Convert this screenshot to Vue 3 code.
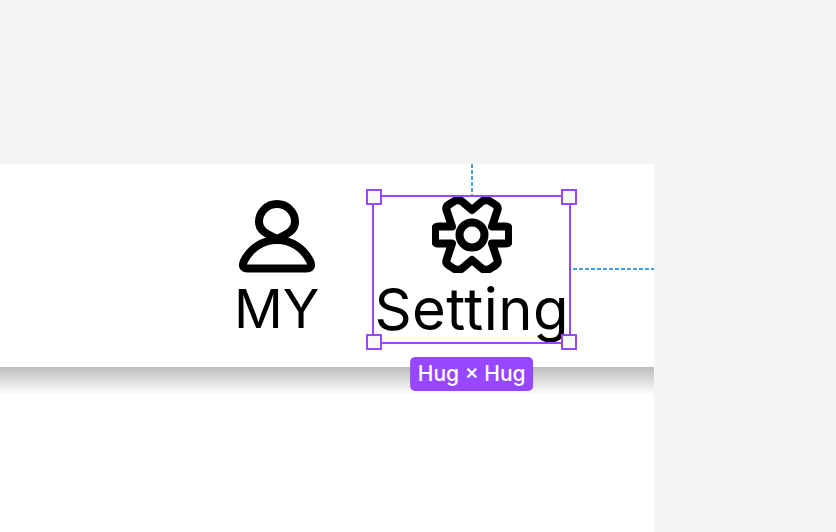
<script setup>
const corners = ["tl", "tr", "bl", "br"];
</script>

<template>
  <div class="page">
    <div class="panel">
      <nav class="tabbar">
        <div class="tab">
          <svg class="icon" width="80" height="76" viewBox="0 0 80 76" fill="none" stroke="#000" stroke-width="8" stroke-linejoin="round">
            <path d="M40 42C33 38 22 35 22 25A18 18 0 0 1 58 25C58 35 47 38 40 42Z" />
            <path d="M40 43C25 43 13 52 7 64Q3.500 71.500 11 71.500L69 71.500Q76.500 71.500 73 64C67 52 55 43 40 43Z" />
          </svg>
          <span class="label">MY</span>
        </div>

        <div class="tab selected">
          <svg class="icon" width="80" height="76" viewBox="-40 -38 80 76" fill="none" stroke="#000" stroke-width="8" stroke-linejoin="round">
            <path d="M0 -25L10 -33.500Q13.500 -36 17.500 -34L23 -30.500Q27 -28 25 -23.500L20 -8.500L33 -8.500Q37 -8.500 37 -4.500L37 4.500Q37 8.500 33 8.500L20 8.500L25 23.500Q27 28 23 30.500L17.500 34Q13.500 36 10 33.500L0 25L-10 33.500Q-13.500 36 -17.500 34L-23 30.500Q-27 28 -25 23.500L-20 8.500L-33 8.500Q-37 8.500 -37 4.500L-37 -4.500Q-37 -8.500 -33 -8.500L-20 -8.500L-25 -23.500Q-27 -28 -23 -30.500L-17.500 -34Q-13.500 -36 -10 -33.500Z" />
            <circle cx="0" cy="0" r="12.500" fill="#fff" />
          </svg>
          <span class="label setting">Setting</span>

          <span v-for="c in corners" :key="c" class="handle" :class="c"></span>
          <span class="guide-top"></span>
          <span class="guide-right"></span>
          <span class="size-tag">Hug × Hug</span>
        </div>
      </nav>
      <div class="tabbar-shadow"></div>
    </div>
  </div>
</template>

<style scoped>
.page {
  width: 836px;
  height: 532px;
  background-color: #f5f5f5;
  padding-top: 164px;
  box-sizing: border-box;
  overflow: hidden;
}

.panel {
  width: 654px;
  height: 368px;
  background-color: #fff;
}

.tabbar {
  height: 203px;
  box-sizing: border-box;
  display: flex;
  justify-content: flex-end;
  align-items: flex-start;
  gap: 55px;
  padding: 33px 85px 0 0;
}

.tabbar-shadow {
  height: 28px;
  background: linear-gradient(#bdbdbd, #fff);
}

.tab {
  position: relative;
  display: flex;
  flex-direction: column;
  align-items: center;
}

.icon {
  display: block;
  margin-bottom: 3px;
}

.label {
  font-family: Inter, sans-serif;
  font-size: 54px;
  line-height: 66px;
  color: #000;
  white-space: nowrap;
}

.setting {
  font-size: 58px;
  letter-spacing: 0.45px;
}

.selected {
  outline: 2px solid #9747ff;
}

.handle {
  position: absolute;
  width: 12px;
  height: 12px;
  background-color: #fafafa;
  border: 2px solid #9747ff;
}

.tl { left: -8px; top: -8px; }
.tr { right: -8px; top: -8px; }
.bl { left: -8px; bottom: -8px; }
.br { right: -8px; bottom: -8px; }

.guide-top {
  position: absolute;
  left: calc(50% - 1px);
  top: -33px;
  width: 2px;
  height: 31px;
  background: repeating-linear-gradient(#3fa0f0 0 4px, transparent 4px 6px);
}

.guide-right {
  position: absolute;
  left: calc(100% + 4px);
  top: 71px;
  width: 81px;
  height: 2px;
  background: repeating-linear-gradient(90deg, #3fa0f0 0 4px, transparent 4px 6px);
}

.size-tag {
  position: absolute;
  left: 50%;
  top: calc(100% + 15px);
  transform: translateX(-50%);
  padding: 0 8px;
  height: 34px;
  line-height: 34px;
  border-radius: 5px;
  background-color: #9747ff;
  color: #fff;
  font-family: Inter, sans-serif;
  font-size: 21px;
  font-weight: 500;
  white-space: nowrap;
}
</style>
